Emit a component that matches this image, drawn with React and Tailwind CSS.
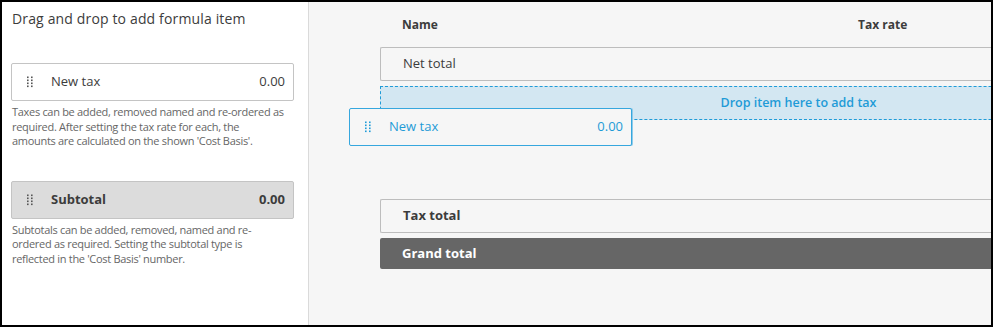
import React from 'react';

const font = { fontFamily: '"Open Sans", "Liberation Sans", sans-serif' };

function Grip({ className = '' }) {
  return (
    <svg width="6" height="12" viewBox="0 0 6 12" className={className} aria-hidden="true">
      {[0, 1].map((c) =>
        [0, 1, 2, 3].map((r) => (
          <rect key={`${c}-${r}`} x={c * 4} y={r * 3 + 0.5} width="1.6" height="1.6" fill="currentColor" />
        )),
      )}
    </svg>
  );
}

function FormulaCard({ label, value, variant = 'tax', className = '' }) {
  const isSubtotal = variant === 'subtotal';
  const isDragging = variant === 'drag';
  return (
    <div
      className={[
        'flex h-[38px] w-[283px] items-center rounded-[2px] border pl-[15px] pr-[8px] text-[13px]',
        isSubtotal ? 'border-[#c4c4c4] bg-[#dcdcdc] font-bold text-[#3c3c3c]' : '',
        isDragging ? 'border-[#36a7de] bg-[#f6f6f6] text-[#1f9bd7] shadow-[1px_0_0_#8fcbea]' : '',
        !isSubtotal && !isDragging ? 'border-[#c4c4c4] bg-white text-[#3c3c3c]' : '',
        className,
      ].join(' ')}
    >
      <Grip className={isDragging ? 'text-[#1f9bd7]' : 'text-[#555]'} />
      <span className="ml-[18px] flex-1">{label}</span>
      <span>{value}</span>
    </div>
  );
}

function Row({ children, bold = false }) {
  return (
    <div
      className={[
        'flex h-[34px] w-[836px] items-center rounded-l-[2px] border border-r-0 border-[#bdbdbd] pl-[22px] text-[13px] text-[#3c3c3c]',
        bold ? 'font-bold' : '',
      ].join(' ')}
    >
      {children}
    </div>
  );
}

export default function App() {
  return (
    <div style={font} className="flex h-[327px] w-[993px] overflow-hidden border-2 border-black">
      <aside className="w-[307px] shrink-0 border-r border-[#dadada] bg-white px-[9px]">
        <h2 className="pt-[7px] pl-[1px] text-[14px] leading-[20px] tracking-[0.15px] text-[#3c3c3c]">
          Drag and drop to add formula item
        </h2>
        <FormulaCard label="New tax" value="0.00" className="mt-[34px]" />
        <p className="mt-[4px] whitespace-nowrap pl-[1px] text-[11px] leading-[14.5px] tracking-[-0.3px] text-[#666]">
          Taxes can be added, removed named and re-ordered as
          <br />
          required. After setting the tax rate for each, the
          <br />
          amounts are calculated on the shown 'Cost Basis'.
        </p>
        <FormulaCard label="Subtotal" value="0.00" variant="subtotal" className="mt-[32px]" />
        <p className="mt-[4px] whitespace-nowrap pl-[1px] text-[11px] leading-[14.5px] tracking-[-0.3px] text-[#666]">
          Subtotals can be added, removed, named and re-
          <br />
          ordered as required. Setting the subtotal type is
          <br />
          reflected in the 'Cost Basis' number.
        </p>
      </aside>

      <main className="relative flex-1 overflow-hidden bg-[#f6f6f6] pl-[71px]">
        <div className="flex h-[45px] items-center pl-[22px] text-[12px] font-bold text-[#3c3c3c]">
          <span className="w-[456px]">Name</span>
          <span>Tax rate</span>
        </div>
        <Row>Net total</Row>
        <div className="mt-[5px] flex h-[34px] w-[836px] items-center justify-center border border-r-0 border-dashed border-[#1f9bd7] bg-[#d3e7f2] text-[12.5px] font-semibold text-[#1f9bd7]">
          Drop item here to add tax
        </div>
        <div className="h-[79px]" />
        <Row bold>Tax total</Row>
        <div className="mt-[5px] flex h-[31px] w-[836px] items-center rounded-l-[2px] bg-[#666666] pl-[22px] text-[13px] font-bold text-white">
          Grand total
        </div>

        <FormulaCard label="New tax" value="0.00" variant="drag" className="absolute left-[40px] top-[106px]" />
      </main>
    </div>
  );
}
